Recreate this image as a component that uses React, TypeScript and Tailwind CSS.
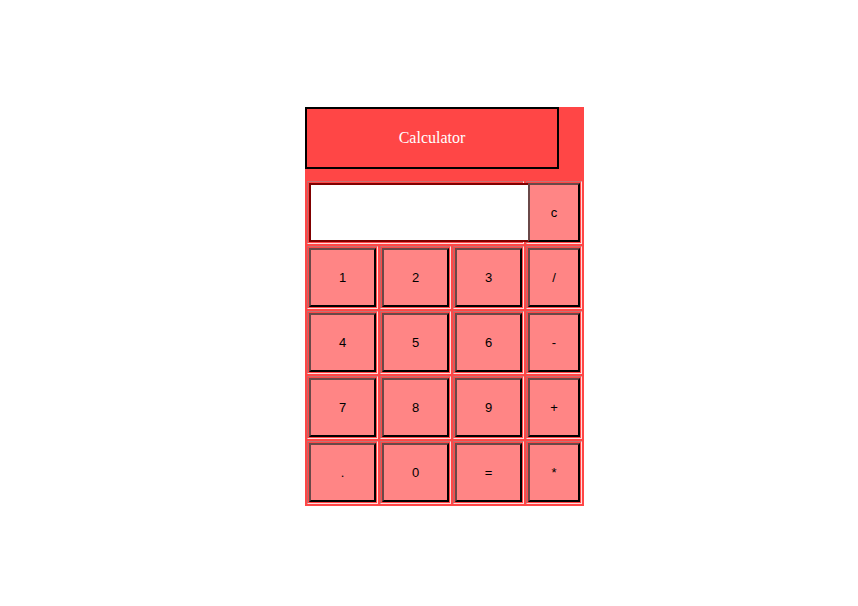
import { useState } from "react";

const rows = [
  ["1", "2", "3", "/"],
  ["4", "5", "6", "-"],
  ["7", "8", "9", "+"],
  [".", "0", "=", "*"],
];

const cell =
  "border border-t-[#c07474] border-l-[#b96b6b] border-r-[#ffdcdc] border-b-[#ffdcdc] p-px";

function Key({ label, onPress }: { label: string; onPress: (label: string) => void }) {
  return (
    <button
      type="button"
      onClick={() => onPress(label)}
      className="relative block h-[59px] w-full border-2 border-t-[#6a4848] border-l-[#6a4848] border-r-black border-b-black bg-[#ff8585] text-center text-[13px] leading-4 text-black"
    >
      {label}
    </button>
  );
}

export default function App() {
  const [value, setValue] = useState("");

  const press = (label: string) => {
    if (label === "c") setValue("");
    else if (label !== "=") setValue(value + label);
  };

  return (
    <div className="flex min-h-screen justify-center bg-white pt-[107px] pl-[31px] font-['Liberation_Sans',Arial,sans-serif]">
      <main className="w-[279px] self-start bg-[#ff4646]">
        <h1 className="mb-[10px] w-[254px] border-2 border-black py-[18px] text-center font-['Liberation_Serif','Times_New_Roman',serif] text-[16px] leading-[22px] text-white">
          Calculator
        </h1>
        <table className="w-full table-fixed border-separate border-spacing-[2px]">
          <colgroup>
            <col className="w-[71px]" />
            <col className="w-[71px]" />
            <col className="w-[71px]" />
            <col />
          </colgroup>
          <tbody>
            <tr>
              <td colSpan={3} className={cell}>
                <input
                  type="text"
                  aria-label="Result"
                  value={value}
                  onChange={(e) => setValue(e.target.value)}
                  className="relative block h-[59px] w-[221px] border-2 border-[#800000] bg-white px-2 text-[13px] text-black outline-none"
                />
              </td>
              <td className={cell}>
                <Key label="c" onPress={press} />
              </td>
            </tr>
            {rows.map((row) => (
              <tr key={row[0]}>
                {row.map((label) => (
                  <td key={label} className={cell}>
                    <Key label={label} onPress={press} />
                  </td>
                ))}
              </tr>
            ))}
          </tbody>
        </table>
      </main>
    </div>
  );
}
